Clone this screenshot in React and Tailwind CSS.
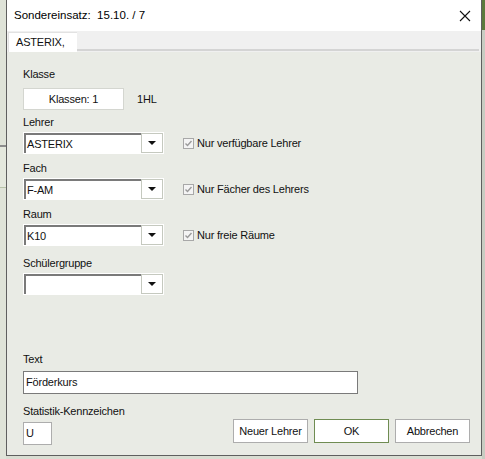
import React from 'react';

const ui = { fontFamily: '"Liberation Sans", Arial, sans-serif' };
const txt = 'text-[11px] tracking-[-0.2px] text-[#111]';

function Label({ children, className = '' }) {
  return <div className={`${txt} leading-[14px] ${className}`}>{children}</div>;
}

function Combo({ value }) {
  return (
    <div className="flex h-[22px] w-[141px] border border-white bg-white">
      <div className={`flex flex-1 items-center border-l-2 border-t-2 border-[#7a7a7a] bg-white pl-[1px] ${txt}`}>
        {value}
      </div>
      <div className="flex w-[22px] items-center justify-center border border-[#c5c9bf] bg-white">
        <svg width="8" height="4" viewBox="0 0 8 4">
          <path d="M0 0h8L4 4z" fill="#111" />
        </svg>
      </div>
    </div>
  );
}

function Check({ children }) {
  return (
    <div className={`flex items-center gap-[3px] ${txt}`}>
      <div className="flex h-[11px] w-[11px] items-center justify-center border border-[#a8a8a8] bg-[#f4f4f4]">
        <svg width="9" height="9" viewBox="0 0 9 9">
          <path d="M1.5 4.5l2 2 4-4.5" fill="none" stroke="#9a9a9a" strokeWidth="1.4" />
        </svg>
      </div>
      {children}
    </div>
  );
}

function Row({ label, value, check }) {
  return (
    <div>
      <Label>{label}</Label>
      <div className="mt-[3px] flex items-center">
        <Combo value={value} />
        {check ? <div className="ml-[19px]"><Check>{check}</Check></div> : null}
      </div>
    </div>
  );
}

function Btn({ children, ok }) {
  return (
    <div
      className={`flex h-[24px] w-[75px] items-center justify-center bg-white ${txt} ${
        ok ? 'border border-[#6f8c52]' : 'border border-[#adadad]'
      }`}
    >
      {children}
    </div>
  );
}

export default function App() {
  return (
    <div className="flex h-[459px] w-[485px] bg-[#d9ddd2]" style={ui}>
      {/* strip of the app behind */}
      <div className="flex w-[6px] flex-col bg-[#dfe3d8]">
        <div className="h-[145px]" />
        <div className="h-[2px] bg-[#8c8c8c]" />
        <div className="h-[40px] bg-[#e4e8dd]" />
        <div className="h-[1px] bg-[#b7c2a8]" />
      </div>

      {/* dialog window */}
      <div className="flex h-[456px] w-[476px] flex-col overflow-hidden border-b border-l border-r border-[#5f5f5f] bg-white">
        <div className="flex h-[31px] shrink-0 items-center justify-between bg-white pl-[7px] pr-[10px]">
          <span className="text-[11.5px] text-black">Sondereinsatz:&nbsp; 15.10. / 7</span>
          <svg width="12" height="12" viewBox="0 0 12 12">
            <path d="M1 1l10 10M11 1L1 11" stroke="#111" strokeWidth="1.1" />
          </svg>
        </div>

        {/* tab strip */}
        <div className="flex h-[21px] shrink-0 items-end bg-[#f0f0f0] pl-[1px]">
          <div className={`flex h-[20px] w-[69px] items-center border-l border-t border-[#e2e2e2] bg-white pl-[7px] ${txt}`}>ASTERIX,</div>
          <div className="mb-[1px] h-[2px] w-[402px] bg-[#d4d4d4]" />
        </div>

        {/* panel */}
        <div className="flex flex-1 flex-col bg-[#e9ebe5] pl-[16px] pr-[10px] pt-[15px]">
          <Label>Klasse</Label>
          <div className="mt-[7px] flex items-center">
            <div className={`flex h-[22px] w-[101px] items-center justify-center border border-[#d4d6d0] bg-white ${txt}`}>
              Klassen: 1
            </div>
            <span className={`ml-[13px] ${txt}`}>1HL</span>
          </div>

          <div className="mt-[5px] flex flex-col gap-[7px]">
            <Row label="Lehrer" value="ASTERIX" check="Nur verfügbare Lehrer" />
            <Row label="Fach" value="F-AM" check="Nur Fächer des Lehrers" />
            <Row label="Raum" value="K10" check="Nur freie Räume" />
          </div>
          <div className="mt-[10px]">
            <Row label="Schülergruppe" value="" />
          </div>

          <Label className="mt-[57px]">Text</Label>
          <div className={`mt-[5px] flex h-[23px] w-[335px] items-center border border-[#7a7a7a] bg-white pl-[2px] ${txt}`}>
            Förderkurs
          </div>

          <Label className="mt-[10px]">Statistik-Kennzeichen</Label>
          <div className="flex items-start">
            <div className={`mt-[4px] flex h-[23px] w-[29px] items-center border border-[#adadad] bg-white pl-[2px] ${txt}`}>
              U
            </div>
            <div className="ml-[181px] mt-[1px] flex gap-[6px]">
              <Btn>Neuer Lehrer</Btn>
              <Btn ok>OK</Btn>
              <Btn>Abbrechen</Btn>
            </div>
          </div>
        </div>
      </div>

      <div className="flex w-[3px] flex-col">
        <div className="h-[30px] bg-[#5c7a3c]" />
        <div className="flex-1 bg-[#c8ccc2]" />
      </div>
    </div>
  );
}
